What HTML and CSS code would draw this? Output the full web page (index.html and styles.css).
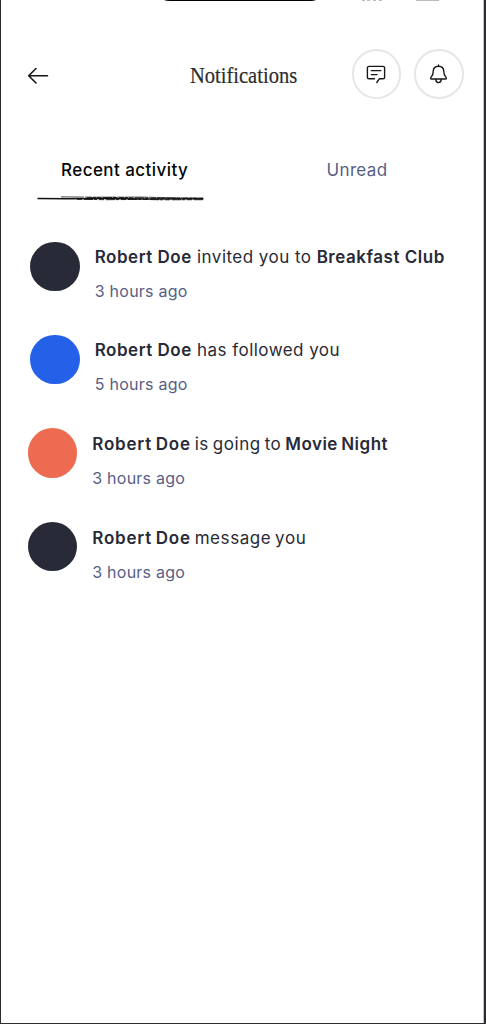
FILE: index.html
```html
<!DOCTYPE html>
<html lang="en">
<head>
<meta charset="utf-8">
<title>Notifications</title>
<link rel="stylesheet" href="styles.css">
</head>
<body>
<main class="screen">
  <svg class="device-top" width="482" height="2" viewBox="0 0 482 2" aria-hidden="true">
    <path d="M163 0h152q-2 1-5 1H169q-4 0-6-1z" fill="#000"/>
    <path d="M361 .5h3m2 0h3m3 0h3m3 0h3" stroke="#bbb"/>
    <path d="M415 .5h23" stroke="#bbb"/>
  </svg>
  <header class="header">
    <svg class="back" width="22" height="18" viewBox="0 0 22 18" fill="none" stroke="#171717" stroke-width="1.6" stroke-linecap="round" stroke-linejoin="round"><path d="M20.500 8.800H1.700M9 1.500L1.700 8.800 9 16"/></svg>
    <h1 class="title"><span class="title-text">Notifications</span></h1>
    <div class="actions">
      <button class="round-button" aria-label="Messages">
        <svg width="20" height="20" viewBox="0 0 20 20" fill="none" stroke="#171717" stroke-width="1.4" stroke-linecap="round" stroke-linejoin="round"><path d="M8.500 14.800H3Q1.400 14.800 1.400 13.200V4Q1.400 2.400 3 2.400h14Q18.600 2.400 18.600 4v9.200q0 1.600-1.600 1.600h-3.700l-2.500 3.700M5.300 6.600h9.600M5.300 10.600h5.800"/></svg>
      </button>
      <button class="round-button" aria-label="Alerts">
        <svg width="20" height="20" viewBox="0 0 20 20" fill="none" stroke="#171717" stroke-width="1.4" stroke-linecap="round" stroke-linejoin="round"><path d="M9.500 2.200c-3.500 0-5.300 2.400-5.300 5.400 0 3.400-.7 4.300-2 5.400-.9.800-.7 2 .3 2h14c1 0 1.200-1.200.3-2-1.300-1.100-2-2-2-5.400 0-3-1.800-5.400-5.300-5.400zM9.500 1v1.200M6.800 15.200c0 4.500 5.400 4.500 5.400 0"/></svg>
      </button>
    </div>
  </header>
  <nav class="tabs">
    <a class="tab active"><span class="tab-label">Recent activity</span>
      <svg class="scribble" width="168" height="6" viewBox="0 0 168 6" fill="none" stroke="#111"><path d="M.5 2.500L30 2.800l38-.2 40 .4 58.500-.2" stroke-width="1.500"/><path d="M24 .9l38 .3 42-.1 32 .7 30 .3" stroke-width=".9" stroke="#333" stroke-dasharray="23 1 7 1"/><path d="M40 3.300l30 .4 35-.3 20 .4 41-.1" stroke-width=".9" stroke-dasharray="5 2 9 1 3 2"/><path d="M50 1.800l28-.2 25 .4 20 .2 43 .1" stroke-width="1" stroke-dasharray="9 1 4 2"/></svg>
    </a>
    <a class="tab unread"><span class="tab-label">Unread</span></a>
  </nav>
  <section class="list">
    <article class="item">
      <span class="avatar dark"></span>
      <div class="body"><p class="message"><b>Robert Doe</b> invited you to <b>Breakfast Club</b></p><p class="time">3 hours ago</p></div>
    </article>
    <article class="item">
      <span class="avatar blue"></span>
      <div class="body"><p class="message"><b>Robert Doe</b> has followed you</p><p class="time">5 hours ago</p></div>
    </article>
    <article class="item compact">
      <span class="avatar coral"></span>
      <div class="body"><p class="message"><b>Robert Doe</b> is going to <b class="event">Movie Night</b></p><p class="time">3 hours ago</p></div>
    </article>
    <article class="item compact">
      <span class="avatar dark"></span>
      <div class="body"><p class="message"><b>Robert Doe</b> message you</p><p class="time">3 hours ago</p></div>
    </article>
  </section>
</main>
</body>
</html>
```
FILE: styles.css
```css
* { box-sizing: border-box; }
body { margin: 0; background: #fff; font-family: Inter, "Liberation Sans", sans-serif; }
h1, p { margin: 0; }
.screen { width: 486px; height: 1024px; border: solid #2c2c2e; border-width: 0 2px 1px 1px; box-shadow: inset -1px 0 #c4c4c4; overflow: hidden; }
.device-top { display: block; }
.header { display: grid; grid-template-columns: 106px 1fr auto; align-items: center; height: 50px; margin-top: 47px; padding: 0 20.500px 0 26px; }
.back { margin-top: 4px; }
.title { width: 108px; margin: 2px 0 0 56.500px; font: 400 24px/30px "Liberation Serif", serif; color: #2c2c2e; white-space: nowrap; }
.title-text { display: inline-block; transform: scaleX(.855); transform-origin: left; -webkit-text-stroke: .2px #2c2c2e; }
.actions { display: flex; gap: 13px; }
.round-button { display: flex; align-items: center; justify-content: center; width: 49.500px; height: 49.500px; padding: 0; border: 2px solid #e6e6ea; border-radius: 50%; background: #fff; }
.tabs { display: flex; height: 60px; margin-top: 59px; padding-left: 36px; font-size: 17px; line-height: 24px; letter-spacing: .44px; }
.tab { display: flex; flex-direction: column; }
.active { width: 168px; color: #050505; font-weight: 500; }
.active .tab-label { margin-left: 24px; }
.scribble { margin-top: 14px; }
.unread { margin-left: 121.500px; color: #575e84; letter-spacing: .35px; }
.list { padding: 23.500px 0 0 29.300px; }
.item { display: flex; gap: 15px; height: 93.4px; }
.avatar { flex: none; width: 49.400px; height: 49.400px; border-radius: 50%; }
.dark { background: #282a37; }
.blue { background: #2560e8; }
.coral { background: #ed6b50; }
.body { padding-top: 3.500px; color: #282a37; white-space: nowrap; }
.message { font-size: 17px; line-height: 24px; letter-spacing: .46px; }
.message b { font-weight: 600; letter-spacing: .52px; }
.time { margin-top: 11px; font-size: 16px; line-height: 22px; letter-spacing: .25px; color: #575e84; }
.compact { margin-left: -2.500px; }
.compact .body { padding-top: 4px; }
.compact .message { letter-spacing: .57px; word-spacing: -1.500px; }
.compact .message b { letter-spacing: .82px; }
.compact .message .event { letter-spacing: .5px; }
```
